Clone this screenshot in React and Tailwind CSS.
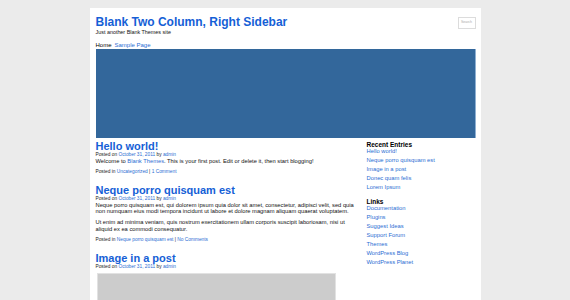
const recent = ['Hello world!', 'Neque porro quisquam est', 'Image in a post', 'Donec quam felis', 'Lorem Ipsum'];
const links = ['Documentation', 'Plugins', 'Suggest Ideas', 'Support Forum', 'Themes', 'WordPress Blog', 'WordPress Planet'];

function Meta() {
  return (
    <p className="text-[4.8px] leading-[5.5px] text-[#222]">
      Posted on <a className="text-[#2a6dd3]">October 31, 2011</a> by <a className="text-[#2a6dd3]">admin</a>
    </p>
  );
}

function Widget({ title, items }) {
  return (
    <div className="mb-[8px]">
      <h3 className="text-[6.5px] leading-[7px] font-bold text-black">{title}</h3>
      <ul>
        {items.map((item) => (
          <li key={item} className="text-[5.8px] leading-[6.5px] mb-[2.5px] text-[#2a6dd3]">
            {item}
          </li>
        ))}
      </ul>
    </div>
  );
}

export default function App() {
  return (
    <div className="min-h-[300px] h-[300px] overflow-hidden bg-[#ebebeb] font-['Liberation_Sans',Arial,sans-serif]">
      <div className="mx-auto mt-[8px] w-[391px] h-[292px] bg-white pl-[6px] pr-[5px] pt-[7px]">
        {/* header */}
        <div className="flex items-start justify-between">
          <div>
            <h1 className="text-[12px] leading-[14px] font-bold text-[#1560d6]">Blank Two Column, Right Sidebar</h1>
            <p className="text-[5.4px] leading-[6px] text-[#111]">Just another Blank Themes site</p>
          </div>
          <div className="mt-[2px] w-[18px] h-[12px] border border-[#dcdcdc] flex items-center justify-center">
            <span className="text-[3.5px] text-[#aaa]">Search</span>
          </div>
        </div>
        <nav className="mt-[7px] flex gap-[3px] text-[6px] leading-[7px]">
          <a className="text-black">Home</a>
          <a className="text-[#2a6dd3]">Sample Page</a>
        </nav>
        <div className="h-[89px] bg-[#33679b] border-r border-[#8fb0d2]" />

        {/* content */}
        <div className="flex gap-[9px]">
          <main className="w-[262px] pt-[2px]">
            <article>
              <h2 className="text-[11px] leading-[12px] font-bold text-[#1560d6]">Hello world!</h2>
              <Meta />
              <p className="text-[5.75px] leading-[6.5px] text-[#111]">
                Welcome to <a className="text-[#2a6dd3]">Blank Themes</a>. This is your first post. Edit or delete it, then start blogging!
              </p>
              <p className="mt-[5px] text-[4.8px] leading-[5.5px] text-[#222]">
                Posted in <a className="text-[#2a6dd3]">Uncategorized</a> | <a className="text-[#2a6dd3]">1 Comment</a>
              </p>
            </article>

            <article className="mt-[9.5px]">
              <h2 className="text-[11px] leading-[12px] font-bold text-[#1560d6]">Neque porro quisquam est</h2>
              <Meta />
              <p className="text-[5.75px] leading-[6.4px] text-[#111]">
                Neque porro quisquam est, qui dolorem ipsum quia dolor sit amet, consectetur, adipisci velit, sed quia non numquam eius modi tempora incidunt ut labore et dolore magnam aliquam quaerat voluptatem.
              </p>
              <p className="mt-[5px] text-[5.75px] leading-[6.4px] text-[#111]">
                Ut enim ad minima veniam, quis nostrum exercitationem ullam corporis suscipit laboriosam, nisi ut aliquid ex ea commodi consequatur.
              </p>
              <p className="mt-[5px] text-[4.8px] leading-[5.5px] text-[#222]">
                Posted in <a className="text-[#2a6dd3]">Neque porro quisquam est</a> | <a className="text-[#2a6dd3]">No Comments</a>
              </p>
            </article>

            <article className="mt-[9px]">
              <h2 className="text-[11px] leading-[12px] font-bold text-[#1560d6]">Image in a post</h2>
              <Meta />
              <div className="mt-[4px] ml-[1px] w-[239px] h-[40px] bg-[#cccccc] border border-[#e2e2e2]" />
            </article>
          </main>

          <aside className="flex-1 pt-[2.5px]">
            <Widget title="Recent Entries" items={recent} />
            <Widget title="Links" items={links} />
          </aside>
        </div>
      </div>
    </div>
  );
}
